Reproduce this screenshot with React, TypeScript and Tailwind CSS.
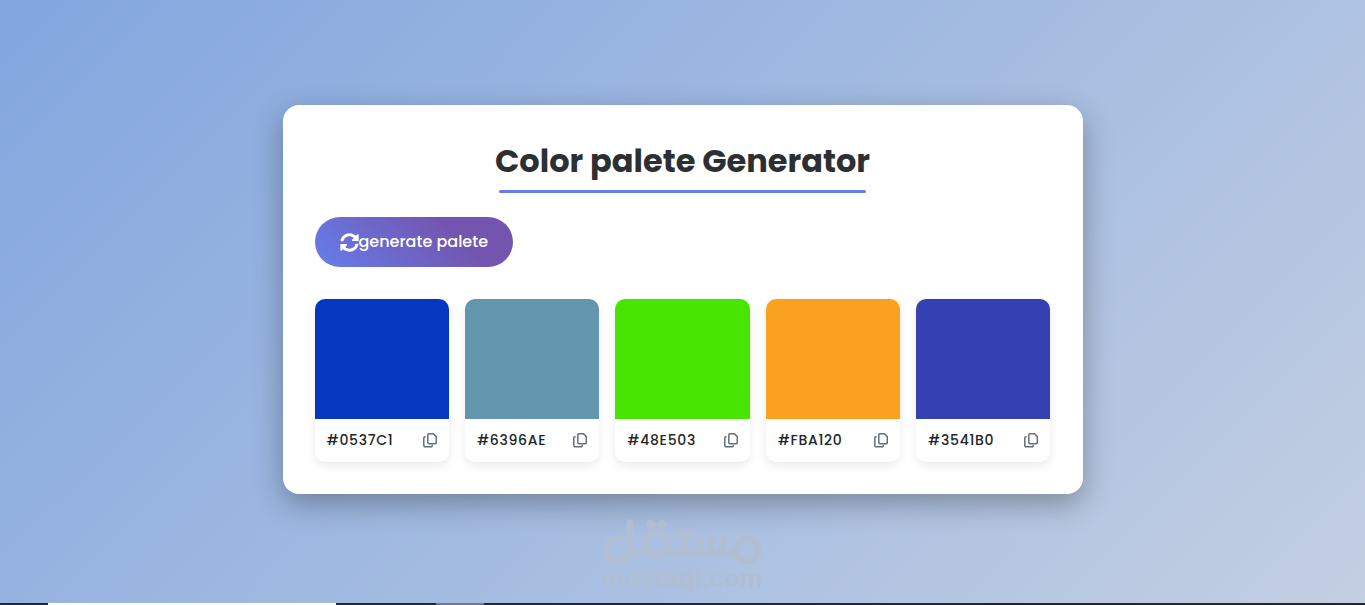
import { useState } from 'react'
import { FaSyncAlt } from 'react-icons/fa'

const INITIAL = ['#0537C1', '#6396AE', '#48E503', '#FBA120', '#3541B0']

function randomColor() {
  return '#' + Math.floor(Math.random() * 0x1000000).toString(16).padStart(6, '0').toUpperCase()
}

function CopyIcon() {
  return (
    <svg viewBox="0 0 14 16" className="w-3.5 h-4" fill="none" stroke="currentColor" strokeWidth="1.5" aria-hidden="true">
      <path d="M6 1.7h4.4l2.9 2.9v6A1.2 1.2 0 0 1 12.1 11.8H6A1.2 1.2 0 0 1 4.8 10.6V2.9A1.2 1.2 0 0 1 6 1.7z" />
      <path d="M2.6 4.7H2A1.2 1.2 0 0 0 .8 5.9v7.6A1.2 1.2 0 0 0 2 14.7h6.1a1.2 1.2 0 0 0 1.2-1.2V13" />
    </svg>
  )
}

interface SwatchProps {
  color: string
}

function Swatch({ color }: SwatchProps) {
  return (
    <li className="overflow-hidden rounded-[10px] bg-white shadow-[0_4px_10px_rgba(0,0,0,0.08)]">
      <div className="h-[120px]" style={{ backgroundColor: color }} />
      <div className="flex items-center justify-between px-3 pt-[11px] pb-3">
        <span className="text-sm font-medium tracking-wider text-[#22262a]">{color}</span>
        <button
          type="button"
          aria-label={`Copy ${color}`}
          className="cursor-pointer text-[#636e7b]"
          onClick={() => navigator.clipboard.writeText(color)}
        >
          <CopyIcon />
        </button>
      </div>
    </li>
  )
}

// Site logo under the card: arabic wordmark drawn as strokes, domain as text.
function Watermark() {
  return (
    <div className="flex flex-col items-center text-[#b0bed4]">
      <svg viewBox="0 0 160 48" className="h-12 w-40" fill="none" stroke="currentColor" strokeWidth="7" strokeLinecap="round" aria-hidden="true">
        <path d="M16 20C8 20 4 25 4 31c0 7 5 12 11 12s12-5 12-12V5" />
        <path d="M27 35h106" />
        <circle cx="53" cy="25" r="11" />
        <circle cx="144" cy="32" r="11" />
        <path d="M82 21l-2 13M97 21l-2 13M109 21l-2 13M121 19l-2 15" />
        <path d="M48 6h.1M59 6h.1M76 15h.1M87 15h.1" strokeWidth="9" />
      </svg>
      <span className="font-['Liberation_Sans'] text-[26px] leading-6 font-bold">mostaql.com</span>
    </div>
  )
}

export default function App() {
  const [colors, setColors] = useState(INITIAL)

  return (
    <div className="flex min-h-screen flex-col bg-linear-[135deg,#82a6df,#c3cfe2] font-['Poppins','Inter',sans-serif]">
      <main className="flex flex-1 flex-col items-center px-5 pt-[105px]">
        <section className="w-full max-w-[800px] rounded-2xl bg-white p-8 shadow-[0_10px_30px_rgba(0,0,0,0.3)]">
          <h1 className="relative mx-auto w-fit pb-2 text-[32px] leading-12 font-bold text-[#2d3033]">
            Color palete Generator
            <span className="absolute inset-x-1 bottom-0 h-[3px] rounded-sm bg-[#667eea]" />
          </h1>
          <button
            type="button"
            className="mt-6 flex h-[50px] cursor-pointer items-center rounded-full bg-linear-[45deg,#667eea,#7355b0_70%] px-[25px] text-base font-medium text-white"
            onClick={() => setColors(colors.map(randomColor))}
          >
            <FaSyncAlt size={19} />
            generate palete
          </button>
          <ul className="mt-8 grid grid-cols-5 gap-4">
            {colors.map((color, i) => (
              <Swatch key={i} color={color} />
            ))}
          </ul>
        </section>
        <div className="pt-6">
          <Watermark />
        </div>
      </main>
      <footer className="flex h-0.5 bg-[#26262e]">
        <div className="ml-12 w-72 bg-white" />
        <div className="ml-[100px] w-12 bg-[#77778c]" />
      </footer>
    </div>
  )
}
